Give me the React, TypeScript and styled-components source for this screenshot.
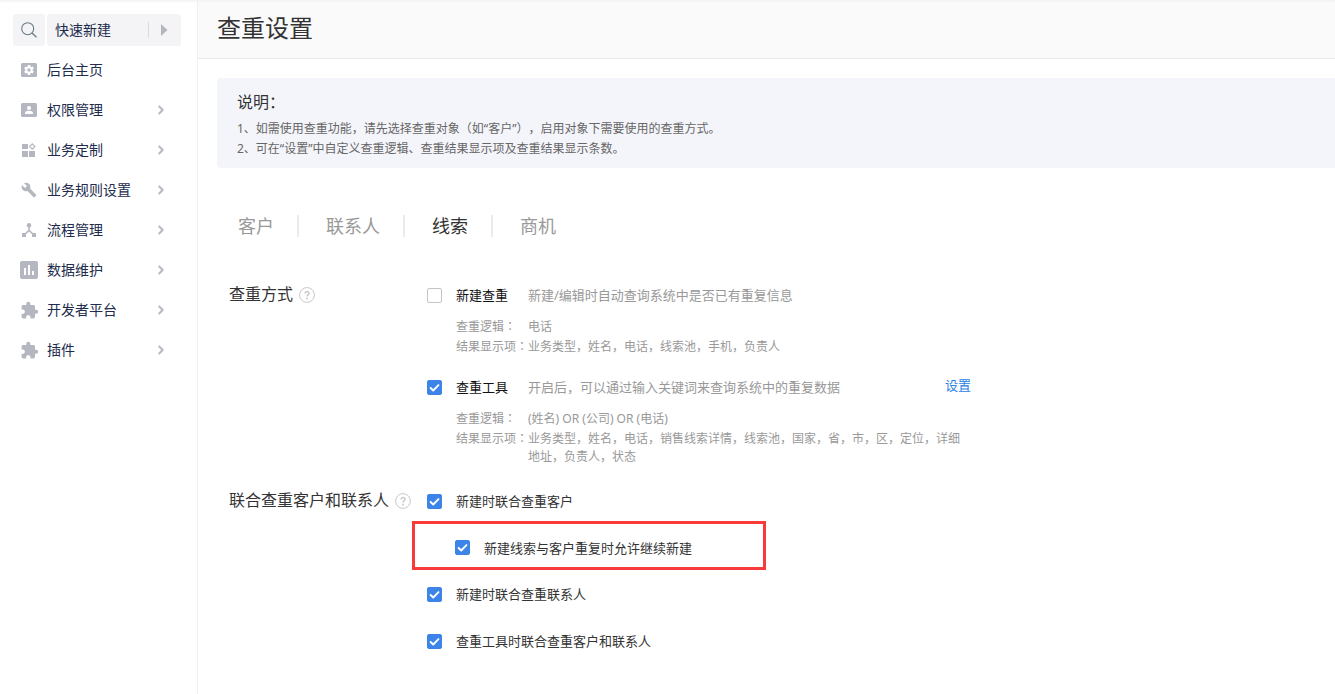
import React, { useState } from "react";
import styled, { createGlobalStyle } from "styled-components";
import { MdAssessment, MdBuild, MdExtension } from "react-icons/md";

const GlobalStyle = createGlobalStyle`
  *, *::before, *::after { box-sizing: border-box; }
  body {
    margin: 0;
    background: #fff;
    color: #333;
    font-family: "Noto Sans", "Noto Sans CJK SC", sans-serif;
    font-size: 13px;
    text-spacing-trim: space-all;
    overflow-x: hidden;
  }
  button, input { font: inherit; color: inherit; }
`;

const Page = styled.div`
  display: flex;
  min-height: 100vh;
  background: linear-gradient(#f2f2f2, #fff 3px);
`;

const Sidebar = styled.aside`
  flex: 0 0 198px;
  padding: 14px 16px 20px 13px;
  border-right: 1px solid #f0f0f0;
`;

const QuickBar = styled.div`
  display: flex;
  gap: 2px;
  margin-bottom: 4px;
`;

const SearchButton = styled.button`
  display: flex;
  align-items: center;
  justify-content: center;
  width: 32px;
  height: 32px;
  padding: 0;
  border: 0;
  border-radius: 3px;
  background: #f4f4f6;
`;

const QuickButton = styled.button`
  display: flex;
  flex: 1;
  align-items: center;
  height: 32px;
  padding: 0 13px 0 8px;
  border: 0;
  border-radius: 3px;
  background: #f4f4f6;
  color: #212b4c;
  font-size: 14px;
`;

const QuickLabel = styled.span`
  flex: 1;
  padding-bottom: 2px;
  text-align: left;
`;

const QuickSplit = styled.span`
  width: 1px;
  height: 16px;
  margin-right: 12px;
  background: #d9dae0;
`;

const MenuItem = styled.a`
  display: flex;
  align-items: center;
  height: 40px;
  padding: 0 17px 0 6px;
  color: #212b4c;
  font-size: 14px;
  text-decoration: none;
`;

const MenuIcon = styled.span`
  display: flex;
  flex: 0 0 20px;
  align-items: center;
  justify-content: center;
  min-width: 0;
  height: 24px;
  margin-right: 8px;
  color: #b4b6c0;

  svg { flex: none; }
`;

const MenuLabel = styled.span`
  flex: 1;
  padding-bottom: 2px;
`;

const Main = styled.main`
  flex: 1;
  min-width: 0;
`;

const Header = styled.header`
  display: flex;
  align-items: center;
  height: 59px;
  padding: 0 19px 2px;
  border-bottom: 1px solid #ebebeb;
  background: linear-gradient(#f2f2f2, #fafafa 3px);
`;

const Title = styled.h1`
  margin: 0;
  font-size: 24px;
  font-weight: 400;
  line-height: 32px;
`;

const Notice = styled.section`
  margin: 19px 0 0 19px;
  padding: 12px 20px 9px;
  border-radius: 4px 0 0 4px;
  background: #f4f5fa;
`;

const NoticeTitle = styled.h2`
  margin: 0 0 5px;
  font-size: 16px;
  font-weight: 400;
  line-height: 24px;
`;

const NoticeLine = styled.p`
  margin: 0;
  color: #666;
  font-size: 12px;
  line-height: 20px;
`;

const Tabs = styled.nav`
  display: flex;
  margin: 47px 0 48px 13px;
`;

const Tab = styled.button<{ $active: boolean }>`
  padding: 0 23px 0 27px;
  border: 0;
  border-right: 2px solid #ebebeb;
  background: none;
  color: ${(p) => (p.$active ? "#333" : "#999")};
  font-size: 18px;
  line-height: 22px;

  &:last-child { border-right: 0; }
`;

const Section = styled.section`
  display: flex;
  max-width: 742px;
  margin: 0 0 25px 31px;
`;

const SectionTitle = styled.h2`
  display: flex;
  flex: 0 0 198px;
  align-items: center;
  gap: 6px;
  height: 20px;
  margin: 0;
  font-size: 16px;
  font-weight: 400;
  line-height: 20px;
  white-space: nowrap;
`;

const SectionName = styled.span`
  padding-bottom: 2px;
`;

const Options = styled.div`
  flex: 1;
  min-width: 0;
`;

const Option = styled.div<{ $after: number }>`
  margin-bottom: ${(p) => p.$after}px;
`;

const OptionRow = styled.div`
  display: flex;
  align-items: center;
  line-height: 20px;
`;

const CheckLabel = styled.label<{ $strong?: boolean }>`
  display: flex;
  align-items: center;
  gap: 14px;
  color: ${(p) => (p.$strong ? "#111" : "#333")};
  line-height: 20px;
`;

const CheckWrap = styled.span`
  display: flex;
  position: relative;

  svg {
    position: absolute;
    inset: 0;
    pointer-events: none;
  }
`;

const CheckInput = styled.input`
  width: 15px;
  height: 15px;
  margin: 0;
  appearance: none;
  border: 1px solid #c4c4c4;
  border-radius: 2px;
  background: #fff;

  &:checked {
    border-color: #3c84e8;
    background: #3c84e8;
  }
`;

const Description = styled.span`
  flex: 1;
  margin-left: 20px;
  color: #999;
`;

const SettingLink = styled.a`
  align-self: flex-start;
  color: #2a82e4;
  line-height: 16px;
  text-decoration: none;
`;

const Details = styled.dl`
  display: grid;
  grid-template-columns: 72px 1fr;
  row-gap: 2px;
  margin: 13px 0 0 29px;
  color: #999;
  font-size: 12px;
  line-height: 18px;
`;

const Term = styled.dt`
  white-space: nowrap;
`;

const Colon = styled.span`
  font-family: "Noto Sans CJK TC", sans-serif;
  line-height: 0;
`;

const Value = styled.dd`
  margin: 0;
`;

const Highlight = styled.div`
  display: flex;
  align-items: center;
  width: 354px;
  height: 49px;
  margin: 10px 0 14px -15px;
  padding: 4px 0 0 40px;
  border: 3px solid #f93a3a;
`;

const GearCardIcon = () => (
  <svg width="16" height="14" viewBox="0 0 16 14" aria-hidden="true">
    <rect width="16" height="14" rx="1.5" fill="currentColor" />
    <path
      fill="#fff"
      fillRule="evenodd"
      d="M6.9 2h2.2l.3 1.4.9.5 1.4-.4 1.1 1.9-1.1 1v1.2l1.1 1-1.1 1.9-1.4-.4-.9.5L9.1 12H6.9l-.3-1.4-.9-.5-1.4.4-1.1-1.9 1.1-1V6.4l-1.1-1 1.1-1.9 1.4.4.9-.5zM8 5.3a1.7 1.7 0 1 0 0 3.4 1.7 1.7 0 0 0 0-3.4z"
    />
  </svg>
);

const PersonCardIcon = () => (
  <svg width="16" height="14" viewBox="0 0 16 14" aria-hidden="true">
    <rect width="16" height="14" rx="1.5" fill="currentColor" />
    <circle cx="8" cy="5" r="2" fill="#fff" />
    <path d="M4 11V9.700C4 8.300 6.500 7.700 8 7.700s4 .6 4 2V11z" fill="#fff" />
  </svg>
);

const BlocksIcon = () => (
  <svg width="14" height="14" viewBox="0 0 14 14" aria-hidden="true">
    <path d="M0 1h6v5H0zM0 8h6v6H0zM7 8h6v6H7z" fill="currentColor" />
    <path d="M10.300 .8l2.700 2.700-2.700 2.700-2.700-2.700z" fill="none" stroke="currentColor" strokeWidth="1.100" />
  </svg>
);

const FlowIcon = () => (
  <svg width="14" height="14" viewBox="0 0 14 14" aria-hidden="true">
    <circle cx="7" cy="2.200" r="2.200" fill="currentColor" />
    <path d="M7 3v4.300L2.500 11.500M7 7.300l4.500 4.200" fill="none" stroke="currentColor" strokeWidth="1.600" />
    <path d="M0 10h4v4H0zM10 10h4v4h-4z" fill="currentColor" />
  </svg>
);

const ChevronIcon = () => (
  <svg width="6" height="10" viewBox="0 0 6 10" aria-hidden="true">
    <path d="M.7 1l4 4-4 4" fill="none" stroke="#b4b6c0" strokeWidth="1.900" />
  </svg>
);

const HelpIcon = () => (
  <svg width="16" height="16" viewBox="0 0 16 16" role="img" aria-label="帮助">
    <circle cx="8" cy="8" r="7.400" fill="none" stroke="#c8c8c8" />
    <path
      d="M6 6.500c0-2.600 4.100-2.600 4.100-.2C10.100 7.800 8 7.900 8 9.600"
      fill="none"
      stroke="#c4c4c4"
      strokeWidth="1.300"
    />
    <circle cx="8" cy="11.500" r=".9" fill="#c4c4c4" />
  </svg>
);

const menu = [
  { label: "后台主页", icon: <GearCardIcon />, nested: false },
  { label: "权限管理", icon: <PersonCardIcon />, nested: true },
  { label: "业务定制", icon: <BlocksIcon />, nested: true },
  { label: "业务规则设置", icon: <MdBuild size={16} />, nested: true },
  { label: "流程管理", icon: <FlowIcon />, nested: true },
  { label: "数据维护", icon: <MdAssessment size={24} />, nested: true },
  { label: "开发者平台", icon: <MdExtension size={19} />, nested: true },
  { label: "插件", icon: <MdExtension size={19} />, nested: true },
];

const tabs = ["客户", "联系人", "线索", "商机"];

type CheckProps = { label: string; initial?: boolean; strong?: boolean };

function Check({ label, initial = false, strong }: CheckProps) {
  const [on, setOn] = useState(initial);
  return (
    <CheckLabel $strong={strong}>
      <CheckWrap>
        <CheckInput type="checkbox" checked={on} onChange={() => setOn(!on)} />
        {on && (
          <svg width="15" height="15" viewBox="0 0 15 15" aria-hidden="true">
            <path
              d="M3.600 8l2.600 2.500 5.300-5.400"
              fill="none"
              stroke="#fff"
              strokeWidth="1.900"
              strokeLinecap="round"
              strokeLinejoin="round"
            />
          </svg>
        )}
      </CheckWrap>
      {label}
    </CheckLabel>
  );
}

function Rules({ logic, fields }: { logic: string; fields: string }) {
  return (
    <Details>
      <Term>查重逻辑<Colon lang="zh-TW">：</Colon></Term>
      <Value>{logic}</Value>
      <Term>结果显示项<Colon lang="zh-TW">：</Colon></Term>
      <Value>{fields}</Value>
    </Details>
  );
}

export default function App() {
  const [tab, setTab] = useState("线索");
  return (
    <>
      <GlobalStyle />
      <Page lang="zh-CN">
        <Sidebar>
          <QuickBar>
            <SearchButton aria-label="搜索">
              <svg width="16" height="16" viewBox="0 0 16 16" aria-hidden="true">
                <circle cx="6.700" cy="6.700" r="6" fill="none" stroke="#6b7a86" strokeWidth="1.100" />
                <path d="M11 11l4.500 4.200" stroke="#6b7a86" strokeWidth="1.300" />
              </svg>
            </SearchButton>
            <QuickButton>
              <QuickLabel>快速新建</QuickLabel>
              <QuickSplit />
              <svg width="7" height="12" viewBox="0 0 7 12" aria-hidden="true">
                <path d="M0 0l6.500 6L0 12z" fill="#b4b6c0" />
              </svg>
            </QuickButton>
          </QuickBar>
          <nav>
            {menu.map((item) => (
              <MenuItem href="#" key={item.label}>
                <MenuIcon>{item.icon}</MenuIcon>
                <MenuLabel>{item.label}</MenuLabel>
                {item.nested && <ChevronIcon />}
              </MenuItem>
            ))}
          </nav>
        </Sidebar>
        <Main>
          <Header>
            <Title>查重设置</Title>
          </Header>
          <Notice>
            <NoticeTitle>说明：</NoticeTitle>
            <NoticeLine>1、如需使用查重功能，请先选择查重对象（如“客户”），启用对象下需要使用的查重方式。</NoticeLine>
            <NoticeLine>2、可在“设置”中自定义查重逻辑、查重结果显示项及查重结果显示条数。</NoticeLine>
          </Notice>
          <Tabs>
            {tabs.map((name) => (
              <Tab key={name} $active={name === tab} onClick={() => setTab(name)}>
                {name}
              </Tab>
            ))}
          </Tabs>
          <Section>
            <SectionTitle>
              <SectionName>查重方式</SectionName>
              <HelpIcon />
            </SectionTitle>
            <Options>
              <Option $after={21}>
                <OptionRow>
                  <Check label="新建查重" strong />
                  <Description>新建/编辑时自动查询系统中是否已有重复信息</Description>
                </OptionRow>
                <Rules logic="电话" fields="业务类型，姓名，电话，线索池，手机，负责人" />
              </Option>
              <Option $after={0}>
                <OptionRow>
                  <Check label="查重工具" initial strong />
                  <Description>开启后，可以通过输入关键词来查询系统中的重复数据</Description>
                  <SettingLink href="#">设置</SettingLink>
                </OptionRow>
                <Rules
                  logic="(姓名) OR (公司) OR (电话)"
                  fields="业务类型，姓名，电话，销售线索详情，线索池，国家，省，市，区，定位，详细地址，负责人，状态"
                />
              </Option>
            </Options>
          </Section>
          <Section>
            <SectionTitle>
              <SectionName>联合查重客户和联系人</SectionName>
              <HelpIcon />
            </SectionTitle>
            <Options>
              <Check label="新建时联合查重客户" initial />
              <Highlight>
                <Check label="新建线索与客户重复时允许继续新建" initial />
              </Highlight>
              <Option $after={27}>
                <Check label="新建时联合查重联系人" initial />
              </Option>
              <Check label="查重工具时联合查重客户和联系人" initial />
            </Options>
          </Section>
        </Main>
      </Page>
    </>
  );
}
